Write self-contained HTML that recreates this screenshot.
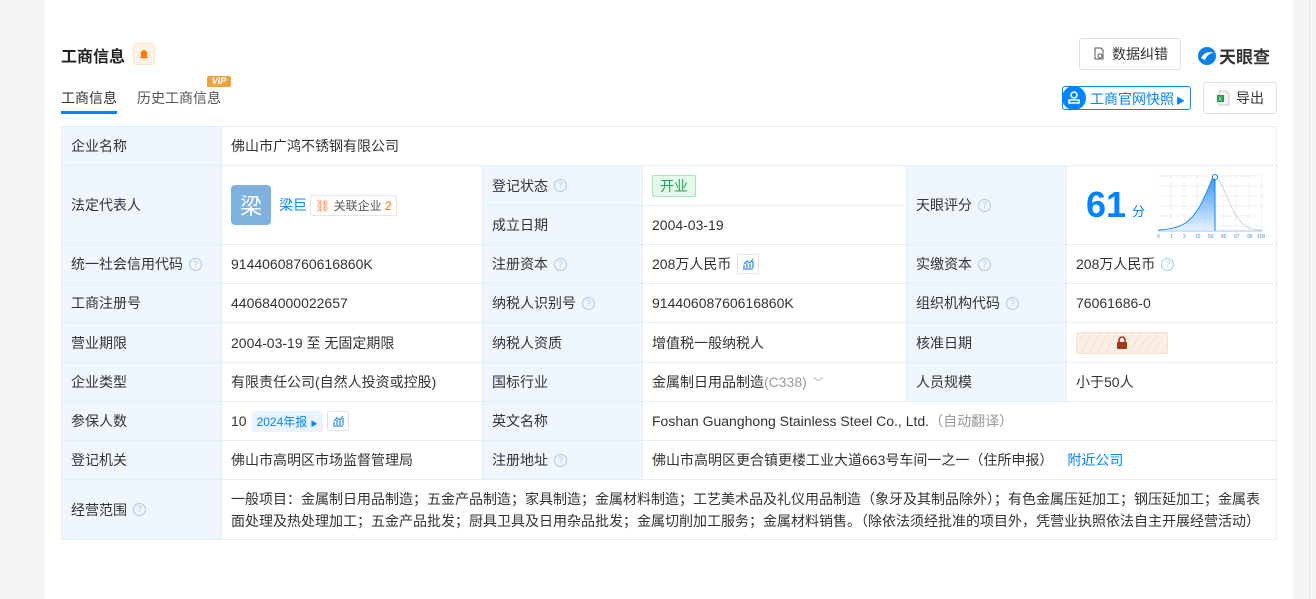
<!DOCTYPE html>
<html><head><meta charset="utf-8"><style>
*{box-sizing:border-box;margin:0;padding:0}
body{width:1316px;height:599px;overflow:hidden;background:#f5f5f5;font-family:"Liberation Sans","Noto Sans CJK SC",sans-serif;color:#333;font-size:14px;position:relative}
.card{position:absolute;left:45px;top:0;width:1248px;height:599px;background:#fff}
.sb{position:absolute;left:1309px;top:0;width:1px;height:599px;background:#e6e6ee}
.a{position:absolute;white-space:nowrap}
.c{position:absolute;border-right:1px solid #e4eef7;border-bottom:1px solid #e4eef7;display:flex;align-items:center;padding-left:9px;white-space:nowrap}
.l{background:#f0f6fd}
.q{display:inline-block;width:13px;height:13px;border:1px solid #aac8e6;border-radius:50%;color:#aac8e6;font-size:9px;line-height:11px;text-align:center;margin-left:6px}
.btn{position:absolute;border:1px solid #dcdfe6;border-radius:3px;background:#fff;display:flex;align-items:center;justify-content:center;font-size:14px}
.ic{display:inline-block;width:22px;height:20px;border:1px solid #dde3ea;border-radius:2px;margin-left:6px;position:relative}
</style></head><body>
<div class="card"></div><div class="sb"></div>
<div class="a" style="left:61px;top:43px;font-size:16px;font-weight:bold;color:#222">工商信息</div>
<div class="a" style="left:133px;top:43px;width:22px;height:22px;background:#fff3e8;border:1px solid #fde2c8;border-radius:3px"><svg width="20" height="20" viewBox="0 0 20 20"><path d="M7 13V9a3 3 0 0 1 6 0v4h1v1H6v-1z M9 14.5h2a1 1 0 0 1-2 0z" fill="#ff7a00"/></svg></div>
<div class="a" style="left:61px;top:88px;font-size:14px;color:#333">工商信息</div>
<div class="a" style="left:61px;top:111px;width:56px;height:3px;background:#0084ff"></div>
<div class="a" style="left:137px;top:88px;font-size:14px;color:#555">历史工商信息</div>
<div class="a" style="left:207px;top:76px;width:24px;height:11px;background:#f0a33e;border-radius:2px 2px 2px 0;color:#fff;font-size:9px;font-weight:bold;font-style:italic;line-height:11px;text-align:center">VIP</div>
<div class="btn" style="left:1079px;top:38px;width:102px;height:32px"><svg width="14" height="14" viewBox="0 0 14 14" style="margin-right:6px"><path d="M3 1h6l2 2v9H3z" fill="none" stroke="#555"/><circle cx="8" cy="9" r="2" fill="none" stroke="#555"/></svg>数据纠错</div>
<div class="a" style="left:1197px;top:43px;display:flex;align-items:center"><svg width="20" height="20" viewBox="0 0 20 20"><circle cx="10" cy="10" r="9" fill="#0a7fe8"/><path d="M4 12c3-6 9-7 13-5-4 0-7 2-9 7z" fill="#fff"/></svg><span style="font-size:17px;font-weight:bold;color:#333;margin-left:2px">天眼查</span></div>
<div class="a" style="left:1062px;top:86px;width:129px;height:24px;border:1px solid #0084ff;border-radius:3px;"></div>
<div class="a" style="left:1062px;top:86px;width:24px;height:24px;border-radius:50%;background:#0084ff"><svg width="24" height="24" viewBox="0 0 24 24"><circle cx="12" cy="9" r="3" fill="none" stroke="#fff" stroke-width="1.6"/><path d="M7 17h10v-3H7z" fill="none" stroke="#fff" stroke-width="1.6"/></svg></div>
<div class="a" style="left:1090px;top:89px;color:#0084ff;font-size:14px">工商官网快照<span style="font-size:9px;margin-left:2px">▶</span></div>
<div class="btn" style="left:1203px;top:82px;width:74px;height:32px"><svg width="14" height="16" viewBox="0 0 14 16" style="margin-right:6px"><path d="M3 1h7l3 3v11H3z" fill="#f3f3f3" stroke="#ccc"/><rect x="1" y="5" width="7" height="7" fill="#1f9c48"/><text x="2.3" y="11" font-size="6" fill="#fff" font-family="Liberation Sans">X</text></svg>导出</div>

<div class="a" style="left:61px;top:126px;width:1216px;height:414px;border-left:1px solid #e4eef7;border-top:1px solid #e4eef7"></div>
<div class="c l" style="left:62px;top:127px;width:160px;height:39px">企业名称</div>
<div class="c" style="left:222px;top:127px;width:1055px;height:39px">佛山市广鸿不锈钢有限公司</div>
<div class="c l" style="left:62px;top:166px;width:160px;height:79px">法定代表人</div>
<div class="c" style="left:222px;top:166px;width:261px;height:79px"><span style="width:40px;height:40px;background:#7fb2de;border-radius:4px;color:#fff;font-size:22px;display:inline-flex;align-items:center;justify-content:center">梁</span><span style="color:#0084ff;margin-left:8px">梁巨</span><span style="border:1px solid #e6e6e6;border-radius:2px;padding:1px 4px;font-size:12px;margin-left:3px;color:#555"><span style="color:#ff7a3c">⛓</span> 关联企业 <span style="color:#ff6a00">2</span></span></div>
<div class="c l" style="left:483px;top:166px;width:160px;height:40px">登记状态<span class="q">?</span></div>
<div class="c" style="left:643px;top:166px;width:264px;height:40px"><span style="background:#e6f7ec;border:1px solid #a9e3bd;color:#1ba854;padding:0 7px;border-radius:2px;font-size:14px;line-height:20px">开业</span></div>
<div class="c l" style="left:483px;top:206px;width:160px;height:39px">成立日期</div>
<div class="c" style="left:643px;top:206px;width:264px;height:39px">2004-03-19</div>
<div class="c l" style="left:907px;top:166px;width:160px;height:79px">天眼评分<span class="q">?</span></div>
<div class="c" style="left:1067px;top:166px;width:210px;height:79px"><span style="color:#0084ff;font-size:36px;font-weight:bold;margin-left:10px">61</span><span style="color:#0084ff;font-size:13px;margin:10px 0 0 6px">分</span></div>
<svg class="a" style="left:1157px;top:172px" width="108" height="68" viewBox="0 0 108 68"><defs><linearGradient id="g" x1="0" y1="0" x2="0" y2="1"><stop offset="0" stop-color="#3b94f5"/><stop offset="1" stop-color="#e3f0fd"/></linearGradient></defs><g stroke="#eef1f5" stroke-width="1"><path d="M1 4h104M1 14h104M1 24h104M1 34h104M1 44h104M1 54h104M14 4v56M27 4v56M40 4v56M53 4v56M66 4v56M79 4v56M92 4v56M105 4v56"/></g><path d="M1 58C25 57 35 50 45 30S55 3 58 5L58 58z" fill="url(#g)"/><path d="M58 5C65 6 70 30 80 45S100 57 105 58" fill="none" stroke="#c8d6e6"/><path d="M1 58C25 57 35 50 45 30S55 3 58 5" fill="none" stroke="#2b8cf0"/><path d="M58 6v53" stroke="#0084ff"/><circle cx="58" cy="5" r="2.5" fill="#fff" stroke="#0084ff"/><path d="M1 59h104" stroke="#9cc6f0"/><g font-size="5" fill="#4a90d9" font-family="Liberation Sans"><text x="0" y="66">0</text><text x="13" y="66">1</text><text x="26" y="66">3</text><text x="38" y="66">15</text><text x="51" y="66">50</text><text x="64" y="66">85</text><text x="77" y="66">97</text><text x="90" y="66">99</text><text x="100" y="66">100</text></g></svg>
<div class="c l" style="left:62px;top:245px;width:160px;height:39px">统一社会信用代码<span class="q">?</span></div>
<div class="c" style="left:222px;top:245px;width:261px;height:39px">91440608760616860K</div>
<div class="c l" style="left:483px;top:245px;width:160px;height:39px">注册资本<span class="q">?</span></div>
<div class="c" style="left:643px;top:245px;width:264px;height:39px">208万人民币<span class="ic"><svg width="20" height="18" viewBox="0 0 20 18"><path d="M5 14h10M6 13v-3M9 13V8M12 13V9M15 13V6M6 9l3-3 3 2 3-4" fill="none" stroke="#3b8fe8" stroke-width="1.3"/></svg></span></div>
<div class="c l" style="left:907px;top:245px;width:160px;height:39px">实缴资本<span class="q">?</span></div>
<div class="c" style="left:1067px;top:245px;width:210px;height:39px">208万人民币<span class="q">?</span></div>
<div class="c l" style="left:62px;top:284px;width:160px;height:39px">工商注册号</div>
<div class="c" style="left:222px;top:284px;width:261px;height:39px">440684000022657</div>
<div class="c l" style="left:483px;top:284px;width:160px;height:39px">纳税人识别号<span class="q">?</span></div>
<div class="c" style="left:643px;top:284px;width:264px;height:39px">91440608760616860K</div>
<div class="c l" style="left:907px;top:284px;width:160px;height:39px">组织机构代码<span class="q">?</span></div>
<div class="c" style="left:1067px;top:284px;width:210px;height:39px">76061686-0</div>
<div class="c l" style="left:62px;top:323px;width:160px;height:40px">营业期限</div>
<div class="c" style="left:222px;top:323px;width:261px;height:40px">2004-03-19 至 无固定期限</div>
<div class="c l" style="left:483px;top:323px;width:160px;height:40px">纳税人资质</div>
<div class="c" style="left:643px;top:323px;width:264px;height:40px">增值税一般纳税人</div>
<div class="c l" style="left:907px;top:323px;width:160px;height:40px">核准日期</div>
<div class="c" style="left:1067px;top:323px;width:210px;height:40px"><span style="width:92px;height:22px;background:repeating-linear-gradient(120deg,#fbefe6 0 6px,#f5e3d6 6px 7px);border:1px solid #f3e1d3;border-radius:2px;display:flex;align-items:center;justify-content:center"><svg width="12" height="13" viewBox="0 0 12 13"><path d="M3 6V4a3 3 0 0 1 6 0v2" fill="none" stroke="#a2391c" stroke-width="1.6"/><rect x="1" y="6" width="10" height="7" rx="1" fill="#a2391c"/></svg></span></div>
<div class="c l" style="left:62px;top:363px;width:160px;height:39px">企业类型</div>
<div class="c" style="left:222px;top:363px;width:261px;height:39px">有限责任公司(自然人投资或控股)</div>
<div class="c l" style="left:483px;top:363px;width:160px;height:39px">国标行业</div>
<div class="c" style="left:643px;top:363px;width:264px;height:39px">金属制日用品制造<span style="color:#999">(C338)</span><span style="color:#aaa;margin-left:6px;font-size:11px">﹀</span></div>
<div class="c l" style="left:907px;top:363px;width:160px;height:39px">人员规模</div>
<div class="c" style="left:1067px;top:363px;width:210px;height:39px">小于50人</div>
<div class="c l" style="left:62px;top:402px;width:160px;height:39px">参保人数</div>
<div class="c" style="left:222px;top:402px;width:261px;height:39px">10<span style="background:#eaf4fe;color:#0084ff;font-size:12px;padding:2px 5px;margin-left:5px;border-radius:2px">2024年报 <span style="font-size:7px">▶</span></span><span class="ic" style="margin-left:4px"><svg width="20" height="18" viewBox="0 0 20 18"><path d="M5 14h10M6 13v-3M9 13V8M12 13V9M15 13V6M6 9l3-3 3 2 3-4" fill="none" stroke="#3b8fe8" stroke-width="1.3"/></svg></span></div>
<div class="c l" style="left:483px;top:402px;width:160px;height:39px">英文名称</div>
<div class="c" style="left:643px;top:402px;width:634px;height:39px">Foshan Guanghong Stainless Steel Co., Ltd.<span style="color:#999">（自动翻译）</span></div>
<div class="c l" style="left:62px;top:441px;width:160px;height:39px">登记机关</div>
<div class="c" style="left:222px;top:441px;width:261px;height:39px">佛山市高明区市场监督管理局</div>
<div class="c l" style="left:483px;top:441px;width:160px;height:39px">注册地址<span class="q">?</span></div>
<div class="c" style="left:643px;top:441px;width:634px;height:39px">佛山市高明区更合镇更楼工业大道663号车间一之一（住所申报）<span style="color:#0084ff;margin-left:14px">附近公司</span></div>
<div class="c l" style="left:62px;top:480px;width:160px;height:60px">经营范围<span class="q">?</span></div>
<div class="c" style="left:222px;top:480px;width:1055px;height:60px;white-space:normal;line-height:22px;font-size:14px;padding-right:6px">一般项目：金属制日用品制造；五金产品制造；家具制造；金属材料制造；工艺美术品及礼仪用品制造（象牙及其制品除外）；有色金属压延加工；钢压延加工；金属表面处理及热处理加工；五金产品批发；厨具卫具及日用杂品批发；金属切削加工服务；金属材料销售。（除依法须经批准的项目外，凭营业执照依法自主开展经营活动）</div>
</body></html>
